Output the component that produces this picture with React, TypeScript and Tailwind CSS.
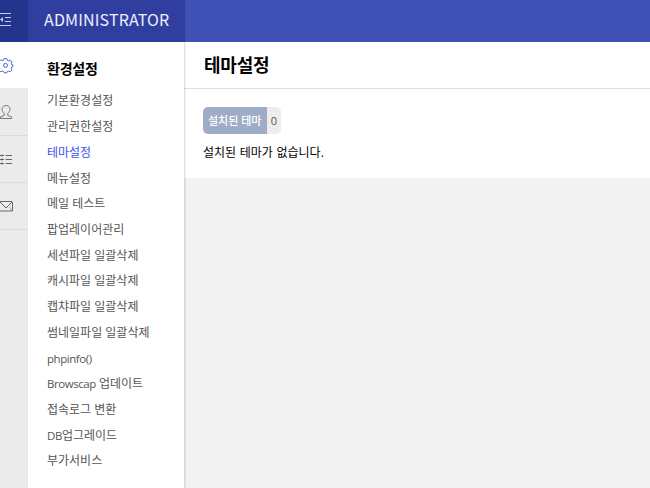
import type { ReactNode } from "react";

const menuItems = [
  { label: "기본환경설정" },
  { label: "관리권한설정" },
  { label: "테마설정", active: true },
  { label: "메뉴설정" },
  { label: "메일 테스트" },
  { label: "팝업레이어관리" },
  { label: "세션파일 일괄삭제" },
  { label: "캐시파일 일괄삭제" },
  { label: "캡챠파일 일괄삭제" },
  { label: "썸네일파일 일괄삭제" },
  { latin: "phpinfo()", label: "" },
  { latin: "Browscap", label: " 업데이트" },
  { label: "접속로그 변환" },
  { latin: "DB", label: "업그레이드" },
  { label: "부가서비스" },
];

function RailIcon({ children, className }: { children: ReactNode; className: string }) {
  return (
    <svg width="14" height="20" viewBox="0 0 14 20" fill="none" stroke="currentColor" className={className}>
      {children}
    </svg>
  );
}

function CollapseIcon() {
  return (
    <RailIcon className="text-[#c3caf0]">
      <path d="M0 2.5h11M5 6.5h6M5 10.5h6M0 14.5h11" />
      <path d="M0 8.5l3-2.5v5z" fill="currentColor" stroke="none" />
    </RailIcon>
  );
}

function GearIcon() {
  return (
    <RailIcon className="text-[#5361c6]">
      <g transform="translate(5.5 10.6)">
        <path
          d="M-1.3-7h2.6l.5 1.7 1.2.5 1.6-.8 1.900 1.900-.8 1.600.5 1.200 1.200.3v1.700l-1.200.4-.5 1.200.8 1.600-1.900 1.900-1.600-.8-1.200.5-.5 1.300h-2.600l-.5-1.300-1.200-.5-1.600.8-1.900-1.900.8-1.600-.5-1.200-1.700-.5v-1.600l1.700-.5.5-1.200-.8-1.600 1.900-1.900 1.600.8 1.200-.5z"
          strokeLinejoin="round"
        />
        <circle cy="-.2" r="2" />
      </g>
    </RailIcon>
  );
}

function UserIcon() {
  return (
    <RailIcon className="text-[#777]">
      <path d="M4.3 11.5C2.9 10.5 2 9 2 7.2 2 4.9 3.7 3.5 6 3.5s4 1.4 4 3.700c0 1.800-.9 3.300-2.300 4.300v1.900l3.800 1.400v1.700H.5v-1.700l3.800-1.400z" />
    </RailIcon>
  );
}

function ListIcon() {
  return (
    <RailIcon className="text-[#666]">
      <path d="M0 6.5h4M5.5 6.5H12M0 10.5h4M5.5 10.5H12M0 14.5h4M5.5 14.5H12" />
      <path d="M2 5v3M2 9v3M2 13v3" strokeOpacity=".6" />
    </RailIcon>
  );
}

function MailIcon() {
  return (
    <RailIcon className="text-[#666]">
      <path d="M-2 5.5h13a1.5 1.5 0 0 1 1.5 1.5v8H-2zM0 6l6 6 6-6" />
      <path d="M12.5 15l-3-4" strokeOpacity=".5" />
    </RailIcon>
  );
}

export default function App() {
  return (
    <div className="flex h-[488px] w-[650px] flex-col overflow-hidden bg-[#f2f2f2] font-['Open_Sans','Noto_Sans_CJK_KR',sans-serif]">
      {/* Top bar */}
      <header className="flex h-[42px] shrink-0 bg-[#3f51b5] text-white">
        <button className="flex w-7 items-center bg-[#23348d]" aria-label="메뉴">
          <CollapseIcon />
        </button>
        <div className="flex w-[157px] items-center bg-[#303f9f] pb-[4px] pl-4">
          <h1 className="font-['Noto_Sans_CJK_KR',sans-serif] text-base leading-5 tracking-[0.15px] text-[#edf0ff]">
            ADMINISTRATOR
          </h1>
        </div>
      </header>

      <div className="flex min-h-0 flex-1">
        {/* Icon rail */}
        <nav className="w-7 shrink-0 bg-[#ebebeb]">
          <button className="flex h-[46px] w-full items-center bg-white"><GearIcon /></button>
          <button className="flex h-[48px] w-full items-center border-b border-[#dcdcdc]"><UserIcon /></button>
          <button className="flex h-[47px] w-full items-center border-b border-[#dcdcdc]"><ListIcon /></button>
          <button className="flex h-[47px] w-full items-center border-b border-[#dcdcdc]"><MailIcon /></button>
        </nav>

        {/* Sub menu */}
        <aside className="z-10 w-[156px] shrink-0 bg-white pl-[19px] pt-[17px] shadow-[1px_0_2px_rgba(0,0,0,0.16)]">
          <h2 className="text-[14px] font-bold leading-5 tracking-[-0.2px] text-black">환경설정</h2>
          <ul className="mt-[9.4px]">
            {menuItems.map((item) => (
              <li
                key={item.latin ?? item.label}
                className={`h-[25.72px] whitespace-pre text-[12px] leading-[26px] ${
                  item.active ? "text-[#3f51f5]" : "text-[#555]"
                }`}
              >
                {item.latin && <span className="text-[11.5px] tracking-[-0.45px]">{item.latin}</span>}
                {item.label}
              </li>
            ))}
          </ul>
        </aside>

        {/* Content */}
        <main className="min-w-0 flex-1">
          <div className="flex h-[47px] items-center border-b border-[#ddd] bg-white pl-5">
            <h2 className="text-lg font-bold tracking-[-0.2px] text-black">테마설정</h2>
          </div>
          <section className="h-[89px] bg-white pl-[19px] pt-[18px]">
            <div className="flex h-[27px] w-[78px] overflow-hidden rounded-[5px] text-[11px] leading-[28px]">
              <span className="w-[64px] whitespace-nowrap bg-[#9eacc6] pl-[5px] font-medium text-white">설치된 테마</span>
              <span className="flex-1 bg-[#ededed] text-center text-[#555]">0</span>
            </div>
            <p className="mt-[9px] text-[12px] leading-[19px] text-black [word-spacing:0.5px]">설치된 테마가 없습니다.</p>
          </section>
        </main>
      </div>
    </div>
  );
}
